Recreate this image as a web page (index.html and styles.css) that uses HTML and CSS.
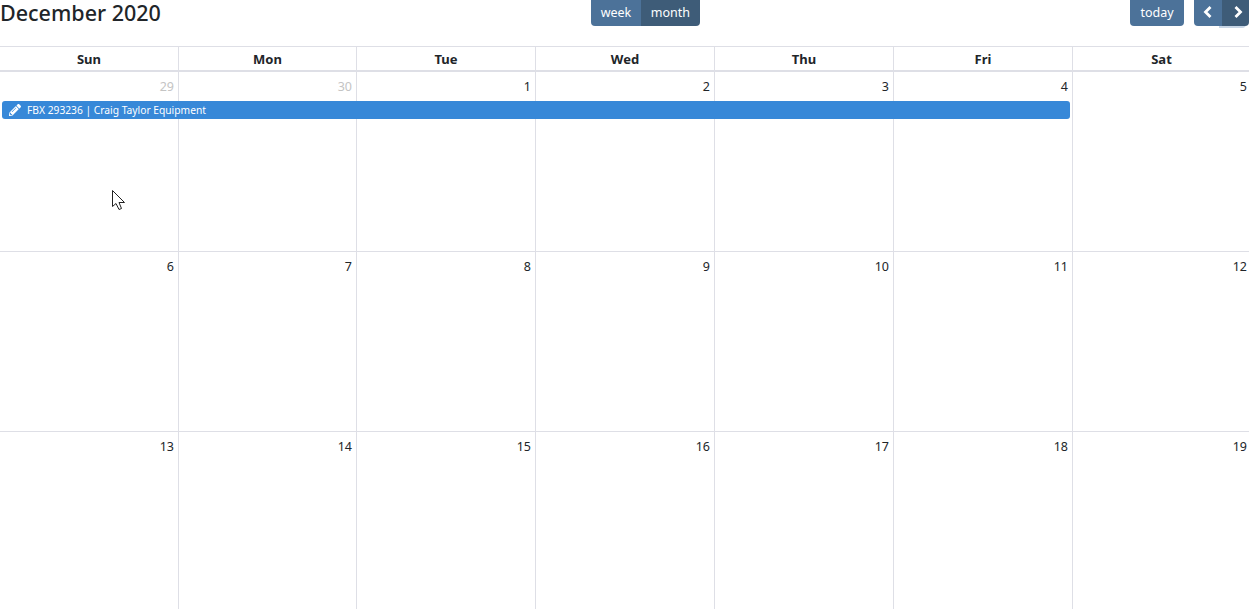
FILE: index.html
```html
<!DOCTYPE html>
<html lang="en">
  <head>
    <meta charset="utf-8">
    <title>Calendar</title>
    <link rel="stylesheet" href="styles.css">
  </head>
  <body>
    <div id="calendar">
      <div class="toolbar">
        <h2>December 2020</h2>
        <div class="btn-group view-switch">
          <button>week</button>
          <button class="active">month</button>
        </div>
        <div class="toolbar-right">
          <button class="today">today</button>
          <div class="btn-group">
            <button class="nav">
              <svg width="10" height="14" viewBox="0 0 10 14"><path d="M7.5 2 L2.5 7 L7.5 12" fill="none" stroke="#fff" stroke-width="2.8"/></svg>
            </button>
            <button class="nav focused">
              <svg width="10" height="14" viewBox="0 0 10 14"><path d="M2.5 2 L7.5 7 L2.5 12" fill="none" stroke="#fff" stroke-width="2.8"/></svg>
            </button>
          </div>
        </div>
      </div>

      <div class="day-names">
        <div>Sun</div><div>Mon</div><div>Tue</div><div>Wed</div><div>Thu</div><div>Fri</div><div>Sat</div>
      </div>

      <div class="week">
        <div class="day other">29</div>
        <div class="day other">30</div>
        <div class="day">1</div>
        <div class="day">2</div>
        <div class="day">3</div>
        <div class="day">4</div>
        <div class="day">5</div>
        <div class="event">
          <svg width="12" height="12" viewBox="0 0 512 512"><path fill="#fff" d="M497.9 142.1l-46.1 46.1c-4.7 4.7-12.3 4.7-17 0l-111-111c-4.7-4.7-4.7-12.3 0-17l46.1-46.1c18.7-18.7 49.1-18.7 67.9 0l60.1 60.1c18.8 18.7 18.8 49.1 0 67.9zM284.2 99.8L21.6 362.4.4 483.9c-2.9 16.4 11.4 30.6 27.8 27.8l121.5-21.3 262.6-262.6c4.7-4.7 4.7-12.3 0-17l-111-111c-4.8-4.7-12.4-4.7-17.1 0zM124.1 339.9c-5.5-5.5-5.5-14.3 0-19.8l154-154c5.5-5.5 14.3-5.5 19.8 0s5.5 14.3 0 19.8l-154 154c-5.5 5.5-14.3 5.5-19.8 0zM88 424h48v36.3l-64.5 11.3-31.1-31.1L51.7 376H88v48z"/></svg>
          <span>FBX 293236 | Craig Taylor Equipment</span>
        </div>
      </div>

      <div class="week">
        <div class="day">6</div>
        <div class="day">7</div>
        <div class="day">8</div>
        <div class="day">9</div>
        <div class="day">10</div>
        <div class="day">11</div>
        <div class="day">12</div>
      </div>

      <div class="week">
        <div class="day">13</div>
        <div class="day">14</div>
        <div class="day">15</div>
        <div class="day">16</div>
        <div class="day">17</div>
        <div class="day">18</div>
        <div class="day">19</div>
      </div>
    </div>

    <svg class="cursor" width="15" height="22" viewBox="0 0 15 22"><path d="M1.5 1.5 V17.5 L5 14.5 L8 20.5 L10.5 19.5 L8 13.5 H13.5 Z" fill="#fff" stroke="#222" stroke-width="1"/></svg>
  </body>
</html>
```

FILE: styles.css
```css
* {
  box-sizing: border-box;
}

html, body {
  margin: 0;
  padding: 0;
  height: 100%;
  overflow: hidden;
  font: 13px/1.5 "Noto Sans", sans-serif;
  color: #212529;
  background: #fff;
}

button {
  font: inherit;
  font-size: 12.5px;
  color: #fff;
  background: #4c7299;
  border: 0;
  padding: 0;
  height: 26px;
}

.toolbar {
  display: flex;
  justify-content: space-between;
  align-items: flex-start;
  height: 46px;
}

.toolbar h2 {
  margin: 0;
  font-size: 21.5px;
  font-weight: 500;
  line-height: 29px;
  margin-top: -2px;
  white-space: nowrap;
}

.btn-group {
  display: flex;
}

.btn-group button:first-child {
  border-bottom-left-radius: 4px;
}

.btn-group button:last-child {
  border-bottom-right-radius: 4px;
}

.view-switch button {
  width: 50px;
}

.view-switch button.active {
  width: 59px;
  background: #3e5c78;
}

.toolbar-right {
  display: flex;
  gap: 10px;
}

.today {
  width: 54px;
  border-radius: 0 0 4px 4px;
}

.nav {
  position: relative;
  z-index: 1;
  width: 28px;
  display: flex;
  align-items: center;
  justify-content: center;
}

.nav svg {
  margin-top: -2px;
}

.nav.focused {
  z-index: 0;
  width: 27px;
  padding-left: 5px;
  background: #3e5c78;
  box-shadow: -3px 2px 0 0 #c8d6e6;
}

.day-names,
.week {
  display: grid;
  grid-template-columns: 179px 178px 179px 179px 179px 179px 1fr;
}

.day-names {
  height: 26px;
  border-top: 1px solid #dedfe6;
  border-bottom: 2px solid #dedfe6;
}

.day-names div {
  text-align: center;
  font-weight: 700;
  line-height: 25px;
  border-right: 1px solid #dedfe6;
}

.day-names div:last-child {
  padding-left: 1px;
  border-right: 0;
}

.week {
  grid-template-rows: 29px 18px 1fr;
  height: 180px;
  border-bottom: 1px solid #dedfe6;
}

.day {
  grid-row: 1 / -1;
  text-align: right;
  padding: 4px 4px 0 0;
  font-size: 12.5px;
  line-height: 22px;
  border-right: 1px solid #dedfe6;
}

.day:nth-child(1) { grid-column: 1; }
.day:nth-child(2) { grid-column: 2; }
.day:nth-child(3) { grid-column: 3; }
.day:nth-child(4) { grid-column: 4; }
.day:nth-child(5) { grid-column: 5; }
.day:nth-child(6) { grid-column: 6; }

.day:nth-child(7) {
  grid-column: 7;
  padding-right: 2px;
  border-right: 0;
}

.day.other {
  color: #c4c4c4;
}

.event {
  grid-column: 1 / span 6;
  grid-row: 2;
  display: flex;
  align-items: center;
  gap: 6px;
  margin: 0 3px 0 2px;
  padding: 1px 0 0 7px;
  font-size: 10.25px;
  color: #fff;
  background: #3788d8;
  border-radius: 3px;
}

.event svg {
  margin-top: -1px;
}

.cursor {
  position: absolute;
  left: 111px;
  top: 189px;
}
```
